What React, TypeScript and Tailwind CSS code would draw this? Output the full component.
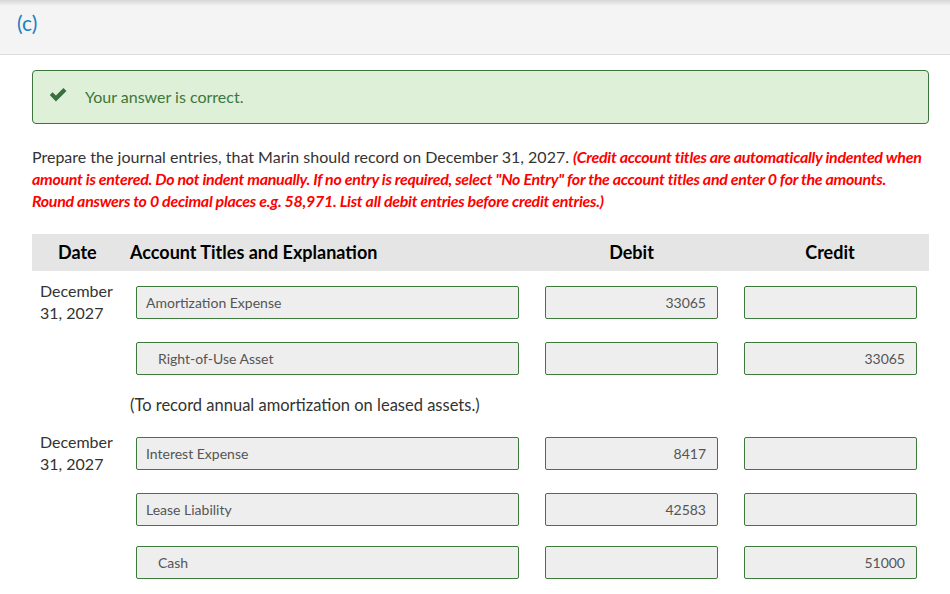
import React from "react";

type Line = {
  account: string;
  credit?: boolean;
  debitAmt?: string;
  creditAmt?: string;
  date?: boolean;
  gap?: string;
};

const Field = ({ value, right, indent }: { value?: string; right?: boolean; indent?: boolean }) => (
  <div
    className={`h-[33px] border border-[#3e7a3b] bg-[#eeeeee] rounded-[2px] flex items-center text-[14px] text-[#555555] ${
      right ? "justify-end pr-[11px]" : indent ? "pl-[21px]" : "pl-[9px]"
    }`}
  >
    {value}
  </div>
);

const JournalLine = ({ line }: { line: Line }) => (
  <div className={`grid grid-cols-[98px_402px_199px_198px] items-start ${line.gap ?? ""}`}>
    <div className="h-[33px] pl-2 -mt-[6px] text-[16px] leading-[22px] text-[#333333]">
      {line.date && (
        <>
          December
          <br />
          31, 2027
        </>
      )}
    </div>
    <div className="ml-[6px] mr-[13px]">
      <Field value={line.account} indent={line.credit} />
    </div>
    <div className="mx-[13px]">
      <Field value={line.debitAmt} right />
    </div>
    <div className="ml-[13px] mr-[12px]">
      <Field value={line.creditAmt} right />
    </div>
  </div>
);

const entry1: Line[] = [
  { account: "Amortization Expense", debitAmt: "33065", date: true },
  { account: "Right-of-Use Asset", credit: true, creditAmt: "33065", gap: "mt-[23px]" },
];

const entry2: Line[] = [
  { account: "Interest Expense", debitAmt: "8417", date: true },
  { account: "Lease Liability", debitAmt: "42583", gap: "mt-[23px]" },
  { account: "Cash", credit: true, creditAmt: "51000", gap: "mt-[20px]" },
];

const App = () => {
  return (
    <div className="w-[950px] h-[594px] overflow-hidden bg-white font-['Lato',sans-serif]">
      {/* part header */}
      <div className="h-[55px] bg-[linear-gradient(to_bottom,#d6d6d6,#f4f4f4_6px)] border-b border-[#dddddd] pl-[17px] pt-[7px]">
        <span className="text-[21px] text-[#1b80c4]">(c)</span>
      </div>

      <div className="px-[32px] w-[929px] box-content">
        <div className="mt-[15px] w-[897px] h-[54px] border border-[#3c763d] rounded-[4px] bg-[#dff0d8] flex items-center">
          <svg viewBox="0 0 20 14" className="w-[19px] h-[14px] ml-[16px] -mt-[5px]">
            <path d="M0.8 7 L3.8 4 L7.3 7.5 L15.2 -0.3 L18.4 2.8 L7.3 13.8 Z" fill="#3a7040" />
          </svg>
          <span className="ml-[17px] text-[16px] text-[#3c763d]">Your answer is correct.</span>
        </div>

        <p className="mt-[22px] w-[897px] text-[16px] leading-[22px] text-[#333333]">
          Prepare the journal entries, that Marin should record on December 31, 2027.{" "}
          <span className="font-bold italic text-[#ff0000] tracking-[-0.3px]">
            (Credit account titles are automatically indented when amount is entered. Do not indent manually. If no
            entry is required, select "No Entry" for the account titles and enter 0 for the amounts. Round answers to
            0 decimal places e.g. 58,971. List all debit entries before credit entries.)
          </span>
        </p>

        <div className="w-[897px] mt-[22px]">
          <div className="grid grid-cols-[98px_402px_199px_198px] h-[37px] items-center bg-[#e5e5e5] text-[18px] font-bold text-black">
            <div className="pl-[26px]">Date</div>
            <div>Account Titles and Explanation</div>
            <div className="text-center">Debit</div>
            <div className="text-center">Credit</div>
          </div>

          <div className="pt-[15px]">
            {entry1.map((l) => (
              <JournalLine key={l.account} line={l} />
            ))}
          </div>
          <div className="mt-[19px] pl-[98px] text-[16.5px] leading-[22px] text-[#333333]">
            (To record annual amortization on leased assets.)
          </div>
          <div className="mt-[21px]">
            {entry2.map((l) => (
              <JournalLine key={l.account} line={l} />
            ))}
          </div>
        </div>
      </div>
    </div>
  );
};

export default App;
